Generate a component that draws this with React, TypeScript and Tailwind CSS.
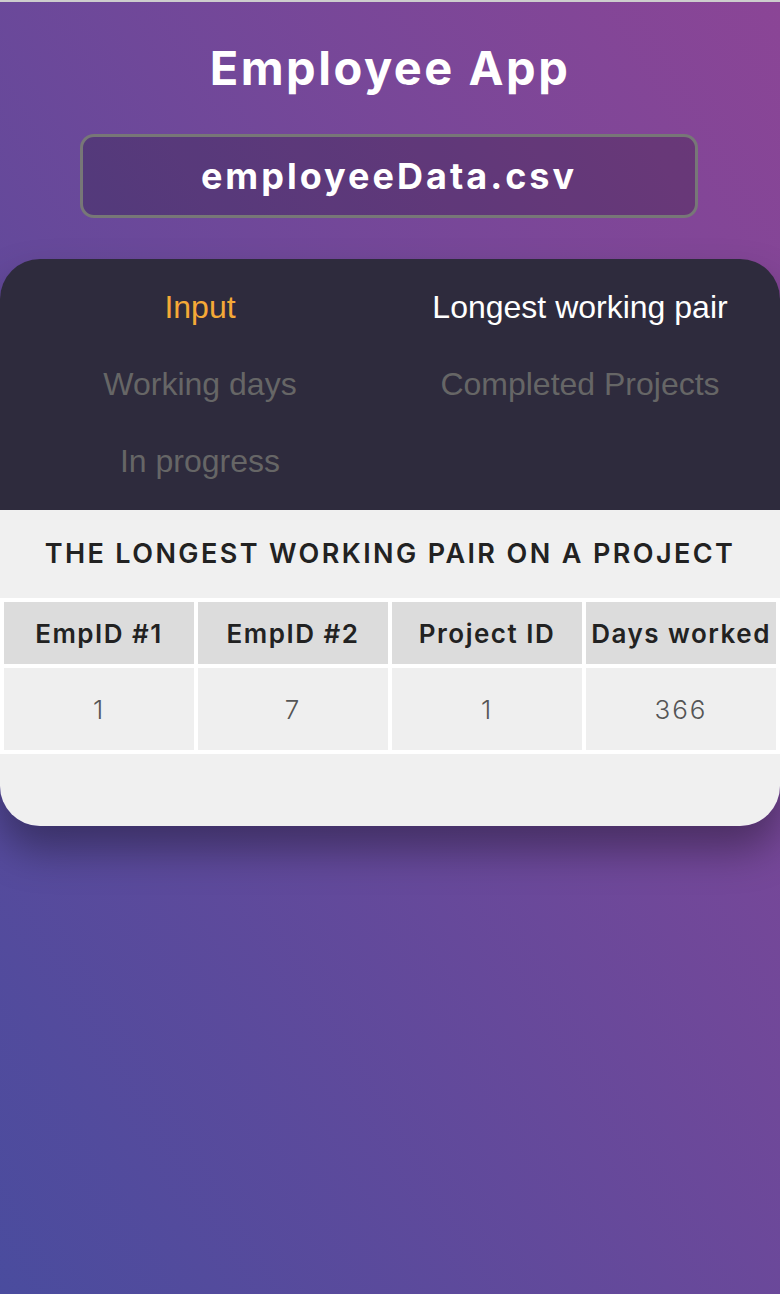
import React from "react"

const tabs = [
  { label: "Input", tone: "text-[#f5a937]" },
  { label: "Longest working pair", tone: "text-white" },
  { label: "Working days", tone: "text-[#666666]" },
  { label: "Completed Projects", tone: "text-[#666666]" },
  { label: "In progress", tone: "text-[#666666]" },
]

const heads = ["EmpID #1", "EmpID #2", "Project ID", "Days worked"]
const row = ["1", "7", "1", "366"]

export default function App() {
  return (
    <div className="min-h-[1294px] bg-[linear-gradient(to_top_right,#4a4c9e,#8b4596)] font-[family-name:Inter,sans-serif]">
      <div className="h-[2px] bg-[#cdcdcd]" />
      <h1 className="h-[132px] flex items-center justify-center text-[47px] font-bold text-white tracking-[2.5px]">
        Employee App
      </h1>
      <div className="ml-[80px] w-[618px] h-[84px] rounded-[14px] border-[3px] border-[#777777] bg-black/20 flex items-center justify-center text-[36px] font-bold text-white tracking-[3px]">
        employeeData.csv
      </div>

      <div className="mt-[41px] rounded-[40px] overflow-hidden shadow-[0_24px_40px_rgba(0,0,0,0.35)]">
        <div className="bg-[#2e2b3d] grid grid-cols-2 px-[10px] pt-[9px] pb-[11px] font-['Liberation_Sans']">
          {tabs.map((t) => (
            <div key={t.label} className={`h-[77px] flex items-center justify-center text-[32px] ${t.tone}`}>
              {t.label}
            </div>
          ))}
        </div>

        <div className="bg-[#f0f0f0] pb-[72px]">
          <h2 className="h-[88px] flex items-center justify-center text-[27px] font-semibold text-[#222222] tracking-[2.4px]">
            THE LONGEST WORKING PAIR ON A PROJECT
          </h2>
          <table className="w-full table-fixed border-separate border-spacing-[4px] bg-white">
            <thead>
              <tr>
                {heads.map((h) => (
                  <th key={h} className="h-[62px] bg-[#dcdcdc] text-[26px] font-semibold text-[#222222] whitespace-nowrap tracking-[1.5px]">
                    {h}
                  </th>
                ))}
              </tr>
            </thead>
            <tbody>
              <tr>
                {row.map((c, i) => (
                  <td key={i} className="h-[82px] bg-[#efefef] text-center text-[26px] font-light text-[#555555] tracking-[2px]">
                    {c}
                  </td>
                ))}
              </tr>
            </tbody>
          </table>
        </div>
      </div>
    </div>
  )
}
